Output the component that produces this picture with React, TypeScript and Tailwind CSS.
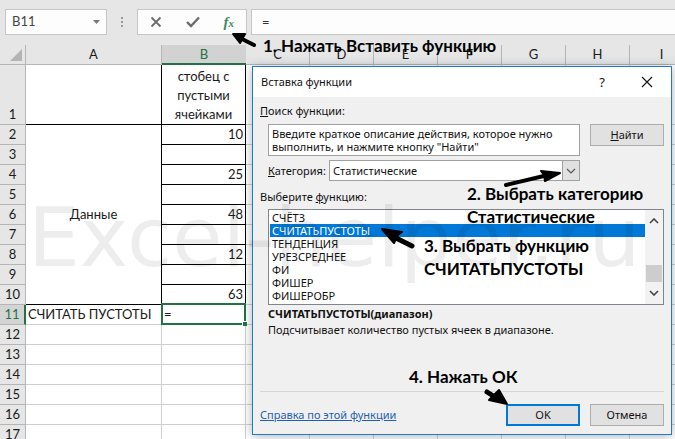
import React, { useState } from 'react';

interface SheetRow {
  id: number;
  value?: string;
}

const letters = ['A', 'B', 'C', 'D', 'E', 'F', 'G', 'H', 'I'];
const restColumns = letters.slice(2);

const dataRows: SheetRow[] = [
  { id: 2, value: '10' },
  { id: 3 },
  { id: 4, value: '25' },
  { id: 5 },
  { id: 6, value: '48' },
  { id: 7 },
  { id: 8, value: '12' },
  { id: 9 },
  { id: 10, value: '63' },
];

const emptyRows = [12, 13, 14, 15, 16, 17];

const functionNames = ['СЧЁТЗ', 'СЧИТАТЬПУСТОТЫ', 'ТЕНДЕНЦИЯ', 'УРЕЗСРЕДНЕЕ', 'ФИ', 'ФИШЕР', 'ФИШЕРОБР'];

const FormulaBar: React.FC = () => (
  <div className="flex h-[45px] items-start bg-[#e6e6e6] pt-[9px] pl-[5px]">
    <div className="flex h-[26px] w-[102px] items-center border border-[#c6c6c6] bg-[#fdfdfd] px-1.5">
      <input
        aria-label="Имя ячейки"
        defaultValue="B11"
        className="w-full min-w-0 bg-transparent text-[13px] text-[#444] outline-none"
      />
      <svg className="h-1 w-[7px] shrink-0" viewBox="0 0 7 4" fill="#777">
        <path d="M0 0h7L3.5 4z" />
      </svg>
    </div>
    <svg className="h-[26px] w-[30px]" viewBox="0 0 30 26" fill="#999">
      <path d="M14 8h2v2h-2zM14 12h2v2h-2zM14 16h2v2h-2z" />
    </svg>
    <div className="flex h-[26px] w-[110px] items-center justify-between border border-[#c6c6c6] bg-[#fdfdfd] px-3">
      <button aria-label="Отмена ввода">
        <svg className="h-3 w-3" viewBox="0 0 12 12" fill="none" stroke="#6b6b6b" strokeWidth="1.8">
          <path d="M1.5 1.5l9 9M10.5 1.5l-9 9" />
        </svg>
      </button>
      <button aria-label="Ввод">
        <svg className="h-3 w-3.5" viewBox="0 0 14 12" fill="none" stroke="#6b6b6b" strokeWidth="2.4">
          <path d="M1 6l4 4 8-8.5" />
        </svg>
      </button>
      <button
        aria-label="Вставить функцию"
        className="flex items-baseline font-['Liberation_Serif',serif] text-[15px] leading-4 font-bold text-[#3f8a5f] italic"
      >
        f<span className="text-[11px] leading-3">x</span>
      </button>
    </div>
    <input
      aria-label="Строка формул"
      defaultValue="="
      className="ml-1 h-[26px] min-w-0 flex-1 border border-r-0 border-[#c6c6c6] bg-[#fdfdfd] px-2.5 text-[13px] text-[#333] outline-none"
    />
  </div>
);

const RowHeader: React.FC<{ id: number; active?: boolean }> = ({ id, active }) => (
  <th
    scope="row"
    className={
      active
        ? 'border-r-2 border-b border-r-[#217346] border-b-[#b5b5b5] bg-[#d4d4d4] p-0 align-bottom font-normal text-[#217346]'
        : 'border-r border-b border-[#b5b5b5] bg-[#e6e6e6] p-0 align-bottom font-normal'
    }
  >
    {id}
  </th>
);

const RestCells: React.FC = () => (
  <>
    {restColumns.map((letter) => (
      <td key={letter} className="border-r border-b border-[#cfcfcf] p-0" />
    ))}
  </>
);

const Sheet: React.FC = () => (
  <table className="w-[694px] table-fixed border-separate border-spacing-0 text-[13px] leading-[19px] text-[#1a1a1a]">
    <colgroup>
      <col className="w-[26px]" />
      <col className="w-[136px]" />
      <col className="w-[84px]" />
      {restColumns.map((letter) => (
        <col key={letter} className="w-16" />
      ))}
    </colgroup>
    <thead>
      <tr className="h-5">
        <th className="border-r border-b border-[#b5b5b5] bg-[#e6e6e6] p-0">
          <svg className="ml-2.5 h-3 w-3" viewBox="0 0 12 12" fill="#b4b4b4">
            <path d="M12 0v12H0z" />
          </svg>
        </th>
        {letters.map((letter) => (
          <th
            key={letter}
            scope="col"
            className={
              letter === 'B'
                ? 'border-b-2 border-[#217346] bg-[#d2d2d2] p-0 align-bottom leading-[18px] font-normal text-[#217346]'
                : 'border-r border-b border-[#b5b5b5] bg-[#e6e6e6] p-0 align-bottom font-normal'
            }
          >
            {letter}
          </th>
        ))}
      </tr>
    </thead>
    <tbody>
      <tr className="h-[60px]">
        <RowHeader id={1} />
        <td className="border-r border-b border-black p-0" />
        <td className="border-r border-b border-black p-0 text-center align-bottom">
          стобец с<br />пустыми<br />ячейками
        </td>
        <RestCells />
      </tr>
      {dataRows.map((row, index) => (
        <tr key={row.id} className="h-5">
          <RowHeader id={row.id} />
          {index === 0 && (
            <td rowSpan={dataRows.length} className="border-r border-b border-black p-0 text-center">
              Данные
            </td>
          )}
          <td className="border-r border-b border-black p-0 pr-0.5 text-right">{row.value}</td>
          <RestCells />
        </tr>
      ))}
      <tr className="h-5">
        <RowHeader id={11} active />
        <td className="border-r border-b border-[#cfcfcf] p-0 pl-0.5 whitespace-nowrap">СЧИТАТЬ ПУСТОТЫ</td>
        <td className="relative border-r border-b border-[#cfcfcf] p-0 pl-0.5">
          =
          <div className="absolute -inset-x-px -top-0.5 -bottom-px border-2 border-[#217346]" />
          <div className="absolute -right-0.5 -bottom-0.5 h-[5px] w-[5px] border-t border-l border-white bg-[#217346]" />
        </td>
        <RestCells />
      </tr>
      {emptyRows.map((id) => (
        <tr key={id} className="h-5">
          <RowHeader id={id} />
          <td className="border-r border-b border-[#cfcfcf] p-0" />
          <td className="border-r border-b border-[#cfcfcf] p-0" />
          <RestCells />
        </tr>
      ))}
    </tbody>
  </table>
);

const FunctionDialog: React.FC = () => {
  const [selected, setSelected] = useState('СЧИТАТЬПУСТОТЫ');

  return (
    <div
      role="dialog"
      aria-labelledby="dialog-title"
      className="absolute top-[66px] left-[252px] w-[420px] border border-[#2b78b5] bg-[#f0f0f0] pb-2 font-['Noto_Sans',sans-serif] text-[11px] leading-4 text-[#111] shadow-[0_1px_10px_rgba(0,40,70,0.35)]"
    >
      <div className="flex h-[30px] items-center bg-white pr-[18px] pl-2">
        <h2 id="dialog-title" className="flex-1">Вставка функции</h2>
        <button aria-label="Справка" className="mr-9 text-[13px]">?</button>
        <button aria-label="Закрыть">
          <svg className="h-3 w-3" viewBox="0 0 12 12" fill="none" stroke="#111" strokeWidth="1.1">
            <path d="M1 1l10 10M11 1L1 11" />
          </svg>
        </button>
      </div>

      <div className="px-[7px] pt-1.5">
        <label htmlFor="search"><span className="underline">П</span>оиск функции:</label>
        <div className="mt-[5px] flex items-start gap-2.5 pl-2">
          <textarea
            id="search"
            defaultValue={'Введите краткое описание действия, которое нужно\nвыполнить, и нажмите кнопку "Найти"'}
            className="block h-8 w-[312px] resize-none overflow-hidden border border-[#a0a0a0] bg-white px-[3px] pt-0.5 leading-[13px] whitespace-pre outline-none"
          />
          <button className="h-[22px] w-[74px] border border-[#adadad] bg-[#e1e1e1]">
            <span className="underline">Н</span>айти
          </button>
        </div>

        <div className="mt-1 flex h-[21px] w-[320px] items-center pl-2">
          <label htmlFor="category" className="w-[61px]"><span className="underline">К</span>атегория:</label>
          <div className="relative h-[21px] flex-1">
            <select id="category" className="block h-full w-full appearance-none border border-[#a0a0a0] bg-white px-[3px] outline-none">
              <option>Статистические</option>
            </select>
            <div className="pointer-events-none absolute inset-y-0 right-0 flex w-[18px] items-center justify-center border border-[#a0a0a0] bg-[#e1e1e1]">
              <svg className="h-1.5 w-2.5" viewBox="0 0 10 6" fill="none" stroke="#555" strokeWidth="1.2">
                <path d="M1 1l4 4 4-4" />
              </svg>
            </div>
          </div>
        </div>

        <p id="list-label" className="mt-2">Выберите <span className="underline">ф</span>ункцию:</p>
        <div className="mt-1 ml-2 flex h-24 border border-[#7f858c] bg-white">
          <ul role="listbox" aria-labelledby="list-label" className="flex-1 overflow-hidden py-px pl-px">
            {functionNames.map((name) => (
              <li
                key={name}
                role="option"
                aria-selected={selected === name}
                onClick={() => setSelected(name)}
                className={`h-[13px] px-0.5 leading-[13px] ${selected === name ? 'bg-[#0078d7] text-white' : ''}`}
              >
                {name}
              </li>
            ))}
          </ul>
          <div className="flex w-[18px] flex-col items-center bg-[#f2f2f2] py-2">
            <svg className="h-1.5 w-2.5" viewBox="0 0 10 6" fill="none" stroke="#444" strokeWidth="1.6">
              <path d="M1 5l4-4 4 4" />
            </svg>
            <div className="mt-auto mb-2 h-[17px] w-4 bg-[#cdcdcd]" />
            <svg className="h-1.5 w-2.5" viewBox="0 0 10 6" fill="none" stroke="#444" strokeWidth="1.6">
              <path d="M1 1l4 4 4-4" />
            </svg>
          </div>
        </div>

        <div className="h-[86px] pt-px pl-2">
          <p className="font-bold">СЧИТАТЬПУСТОТЫ(диапазон)</p>
          <p>Подсчитывает количество пустых ячеек в диапазоне.</p>
        </div>

        <div className="flex items-center gap-2.5 border-t border-[#d5d5d5] pt-3">
          <a href="#help" className="mr-auto text-[#1f5fae] underline">Справка по этой функции</a>
          <button className="h-[22px] w-[74px] border-2 border-[#0078d7] bg-[#e1e1e1]">OK</button>
          <button className="h-[22px] w-[74px] border border-[#adadad] bg-[#e1e1e1]">Отмена</button>
        </div>
      </div>
    </div>
  );
};

// Hand-drawn arrows and numbered hints over the sheet and the dialog
const Annotations: React.FC = () => (
  <div className="pointer-events-none absolute inset-0 text-[17px] leading-[23px] font-bold whitespace-nowrap text-black">
    <p className="absolute top-[34px] left-[263px]">1. Нажать Вставить функцию</p>
    <p className="absolute top-[182px] left-[467px]">2. Выбрать категорию<br />Статистические</p>
    <p className="absolute top-[234px] left-[424px]">3. Выбрать функцию<br />СЧИТАТЬПУСТОТЫ</p>
    <p className="absolute top-[365px] left-[409px]">4. Нажать ОК</p>
    <svg
      className="absolute top-0 left-0 h-[439px] w-[675px]"
      viewBox="0 0 675 439"
      fill="#000"
      stroke="#000"
      strokeLinecap="round"
      strokeLinejoin="round"
    >
      <path strokeWidth="4" d="M254 45L240 38" />
      <path strokeWidth="2" d="M233 34l12 0-5 9z" />
      <path strokeWidth="4" d="M506 185L548 175" />
      <path strokeWidth="2" d="M560 173l-19-2 3 4 1 6z" />
      <path strokeWidth="5" d="M412 246L396 238" />
      <path strokeWidth="2" d="M382 229l20 3-4 3-4 8z" />
      <path strokeWidth="5" d="M487 392L495 397" />
      <path strokeWidth="2" d="M507 404l-8-14-3 3-7 7z" />
    </svg>
  </div>
);

export default function App() {
  return (
    <main className="relative h-screen overflow-hidden bg-white font-[Lato,sans-serif]">
      <FormulaBar />
      <Sheet />
      <FunctionDialog />
      <div className="pointer-events-none absolute top-[180px] left-[28px] font-['DejaVu_Sans',sans-serif] text-[82px] leading-[116px] whitespace-nowrap text-black/7">
        Excel-helper.ru
      </div>
      <Annotations />
    </main>
  );
}
